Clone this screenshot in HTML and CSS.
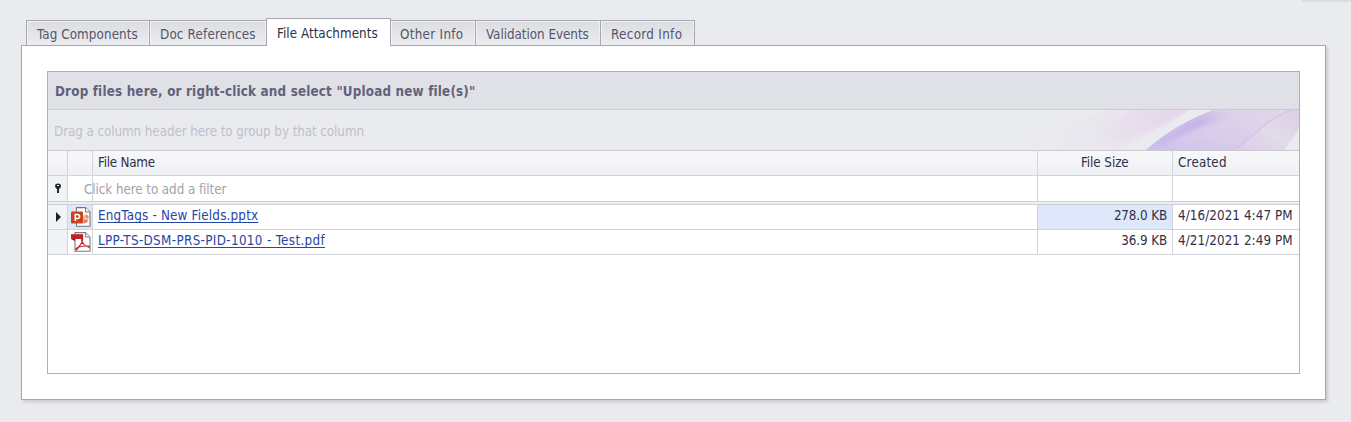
FILE: index.html
```html
<!DOCTYPE html>
<html lang="en">
<head>
<meta charset="utf-8">
<title>File Attachments</title>
<link rel="stylesheet" href="styles.css">
</head>
<body>
<div class="top-edge"></div>
<nav class="tabs">
  <div class="tab tab-components"><span>Tag Components</span></div>
  <div class="tab tab-references"><span>Doc References</span></div>
  <div class="tab tab-active"><span>File Attachments</span></div>
  <div class="tab tab-other"><span>Other Info</span></div>
  <div class="tab tab-events"><span>Validation Events</span></div>
  <div class="tab tab-record"><span>Record Info</span></div>
</nav>
<main class="panel">
  <section class="grid">
    <div class="caption"><span>Drop files here, or right-click and select "Upload new file(s)"</span></div>
    <div class="group-bar">
      <span>Drag a column header here to group by that column</span>
      <svg class="ribbon" width="300" height="40" viewBox="0 0 300 40">
        <defs>
          <linearGradient id="pink" x1="0" x2="1"><stop offset="0" stop-color="#e8daec" stop-opacity="0"/><stop offset=".6" stop-color="#e6d5eb" stop-opacity=".7"/><stop offset="1" stop-color="#e6cdea"/></linearGradient>
          <linearGradient id="violet" x1="0" y1="1" x2="1" y2="0"><stop offset="0" stop-color="#cdc1ec"/><stop offset=".4" stop-color="#d8cdea"/><stop offset="1" stop-color="#e0d8e9"/></linearGradient>
          <linearGradient id="fold" x1="0" x2="1"><stop offset="0" stop-color="#c9bcec"/><stop offset=".6" stop-color="#c8b4e8"/><stop offset="1" stop-color="#d8cce8" stop-opacity="0"/></linearGradient>
          <linearGradient id="tail" x1="0" y1="1" x2="1" y2="0"><stop offset="0" stop-color="#dccde8"/><stop offset=".5" stop-color="#e1dbea"/><stop offset="1" stop-color="#dccfe7"/></linearGradient>
          <filter id="soft" x="-20%" y="-40%" width="140%" height="180%"><feGaussianBlur stdDeviation="2"/></filter>
          <clipPath id="sheet"><path d="M147 40Q178 13 215 0H300V20L285 40z"/></clipPath>
        </defs>
        <path d="M30 28Q80 8 110 0H190Q155 24 118 40H50z" fill="url(#pink)" opacity=".4"/>
        <path d="M85 24Q118 12 130 0H188Q155 20 120 32z" fill="url(#pink)" filter="url(#soft)" opacity=".8"/>
        <g clip-path="url(#sheet)">
          <path d="M147 40Q178 13 215 0H300V20L285 40z" fill="url(#violet)"/>
          <path d="M147 40Q178 13 212 2Q235 0 240 4Q228 11 206 16Q184 24 166 36z" fill="url(#fold)" filter="url(#soft)"/>
          <path d="M147 40Q178 13 215 0" fill="none" stroke="#c4b3e9" stroke-width="1.6" opacity=".7"/>
          <path d="M235 40Q253 27 266 15Q278 5 292 0H300V20L285 40z" fill="url(#tail)"/>
          <path d="M235 40Q253 27 266 15Q278 5 292 0" fill="none" stroke="#d2bbe4" stroke-width="1.6" opacity=".6"/>
        </g>
        <path d="M300 18Q293 31 285 40H300z" fill="#eaebef"/>
      </svg>
    </div>
    <div class="row header">
      <div class="cell indicator"></div><div class="cell"></div>
      <div class="cell name"><span class="t-name">File Name</span></div>
      <div class="cell size"><span class="t-size">File Size</span></div>
      <div class="cell created"><span class="t-created">Created</span></div>
    </div>
    <div class="row filter">
      <div class="cell indicator"><svg width="19" height="25" viewBox="0 0 19 25"><path fill-rule="evenodd" fill="#26263a" d="M7 10Q7 7.5 10 7.5T13 10Q13 12.2 11 13V17H9V13Q7 12.2 7 10zM9 9V10H11V9z"/></svg></div>
      <div class="cell"></div><div class="cell"></div><div class="cell"></div><div class="cell"></div>
      <span class="filter-hint">Click here to add a filter</span>
    </div>
    <div class="separator"></div>
    <div class="row data">
      <div class="cell indicator"><svg width="19" height="24" viewBox="0 0 19 24"><path fill="#1e1e32" d="M8 7L13 12L8 17z"/></svg></div>
      <div class="cell picked icon">
        <svg width="22" height="22" viewBox="0 0 22 22">
          <path d="M6.5 1.6H15.5L20 6V20.3H6.5z" fill="#fff" stroke="#777" stroke-width="1.1"/>
          <path d="M15.5 1.6V6H20" fill="#fff" stroke="#777"/>
          <path d="M13.4 9.5H14.5V13.5H18Q18 17.5 13.4 17.5z" fill="#ee7c58"/><path d="M15.3 8.5Q18.8 8.5 18.8 12.5H15.3z" fill="#f08b6b"/>
          <rect x="1" y="5.5" width="12" height="12" rx="1" fill="#ca4420"/>
          <path d="M5.3 15V8.5H7.5Q9.6 8.5 9.6 10.4T7.5 12.4H5.3" fill="none" stroke="#fff" stroke-width="1.5"/>
        </svg>
      </div>
      <div class="cell name"><a class="link-pptx">EngTags - New Fields.pptx</a></div>
      <div class="cell size picked"><span class="v-size">278.0 KB</span></div>
      <div class="cell created"><span class="v-date">4/16/2021 4:47 PM</span></div>
    </div>
    <div class="row data">
      <div class="cell indicator"></div>
      <div class="cell icon">
        <svg width="22" height="22" viewBox="0 0 22 22">
          <path d="M5 1.6H15.5L20 6V20.3H5z" fill="#fff" stroke="#7b7b7b" stroke-width="1.1"/>
          <path d="M15.5 1.6V6H20" fill="#e9e9e9" stroke="#858585"/>
          <path d="M1 3.2H13.2V8H1z" fill="#c5202a"/><path d="M1 8H5V10z" fill="#851018"/>
          <path d="M6.3 18.8Q4.6 18.1 8.5 15.9Q12.8 11.5 12.6 8.5Q11.5 6.9 11.6 9.2Q13 14.5 18.8 16.3Q20.2 16.3 18.8 15.2Q13.5 14.5 8.5 16.2Q6.7 19.4 6.3 18.8z" fill="none" stroke="#c62b34" stroke-width="1.2"/>
        </svg>
      </div>
      <div class="cell name"><a class="link-pdf">LPP-TS-DSM-PRS-PID-1010 - Test.pdf</a></div>
      <div class="cell size"><span class="v-size">36.9 KB</span></div>
      <div class="cell created"><span class="v-date">4/21/2021 2:49 PM</span></div>
    </div>
  </section>
</main>
</body>
</html>
```
FILE: styles.css
```css
* { box-sizing: border-box; }
body {
  margin: 0;
  width: 1351px;
  height: 422px;
  overflow: hidden;
  background: #eaebef;
  color: #30304a;
  font: 13.3px/16px "DejaVu Sans Condensed", "DejaVu Sans", sans-serif;
  font-stretch: condensed;
  letter-spacing: -0.07px;
  white-space: nowrap;
}
.top-edge { height: 2px; width: 49px; margin-left: auto; background: #dcdde1; }
.tabs { display: flex; align-items: flex-end; height: 44px; padding-left: 26px; position: relative; z-index: 1; }
.tab {
  height: 26px;
  padding: 6px 0 0 10px;
  border: 1px solid #a5a6b0;
  border-left-width: 0;
  box-shadow: inset 1px 1px #f3f3f6, inset -1px 0 #efeff3;
  background: linear-gradient(#dcdde1, #ebecef);
  color: #55556c;
}
.tab-components { width: 124px; border-left-width: 1px; letter-spacing: 0.1px; }
.tab-references { width: 116px; border-right: 0; letter-spacing: 0.17px; }
.tab-active { width: 125px; height: 28px; padding-top: 7px; border-left-width: 1px; border-bottom: 0; background: #fff; box-shadow: none; color: #30304a; letter-spacing: 0.04px; }
.tab-other { width: 85px; padding-left: 9px; letter-spacing: 0.3px; }
.tab-events { width: 125px; letter-spacing: -0.03px; }
.tab-record { width: 94px; letter-spacing: 0.33px; }
.panel {
  width: 1305px;
  height: 355px;
  margin: -1px 0 0 21px;
  padding: 25px;
  border: 1px solid #a5a6ae;
  background: #fff;
  box-shadow: 2px 2px 3px #c8c9ce;
}
.grid { width: 1253px; height: 303px; border: 1px solid #aeb0b7; }
.caption {
  height: 38px;
  padding: 12px 0 0 7px;
  border-bottom: 1px solid #c9cad0;
  background: #e0e1e6;
  color: #62627b;
  font-weight: bold;
  letter-spacing: 0.19px;
}
.group-bar { display: flex; justify-content: space-between; height: 41px; padding-left: 6px; border-bottom: 1px solid #c9cad0; background: #eaebef; color: #bfc0ca; }
.group-bar > span { padding-top: 14px; }
.row { display: grid; grid-template-columns: 20px 25px 945px 135px 126px; height: 25px; position: relative; }
.cell { border-right: 1px solid #d2d3db; border-bottom: 1px solid #d2d3db; padding-top: 3px; }
.cell:last-of-type { border-right: 0; }
.indicator { padding: 0; background: #f2f3f5; }
.indicator svg { display: block; }
.header .cell { padding-top: 4px; background: linear-gradient(#f8f8fa, #eff0f3); }
.name { padding-left: 5px; }
.created { padding-left: 5px; }
.size { text-align: right; padding-right: 5px; }
.header .size { text-align: left; padding-left: 43px; }
.filter .cell { border-bottom: 0; }
.filter-hint { position: absolute; left: 36px; top: 6px; color: #a3a3ab; }
.separator { height: 4px; border-top: 1px solid #cdced6; border-bottom: 1px solid #cdced6; background: #eeeff3; }
.icon { padding: 1px 0 0 2px; }
.icon svg { display: block; }
.picked { background: #dfe7fb; }
.t-name { letter-spacing: -0.25px; }
.t-created { letter-spacing: 0.2px; }
.v-size { letter-spacing: -0.12px; }
.v-date { letter-spacing: 0.08px; }
a { color: #2648a4; text-decoration: underline; text-underline-offset: 2px; text-decoration-skip-ink: none; }
.link-pptx { letter-spacing: 0.2px; }
.link-pdf { letter-spacing: 0.35px; }
```
